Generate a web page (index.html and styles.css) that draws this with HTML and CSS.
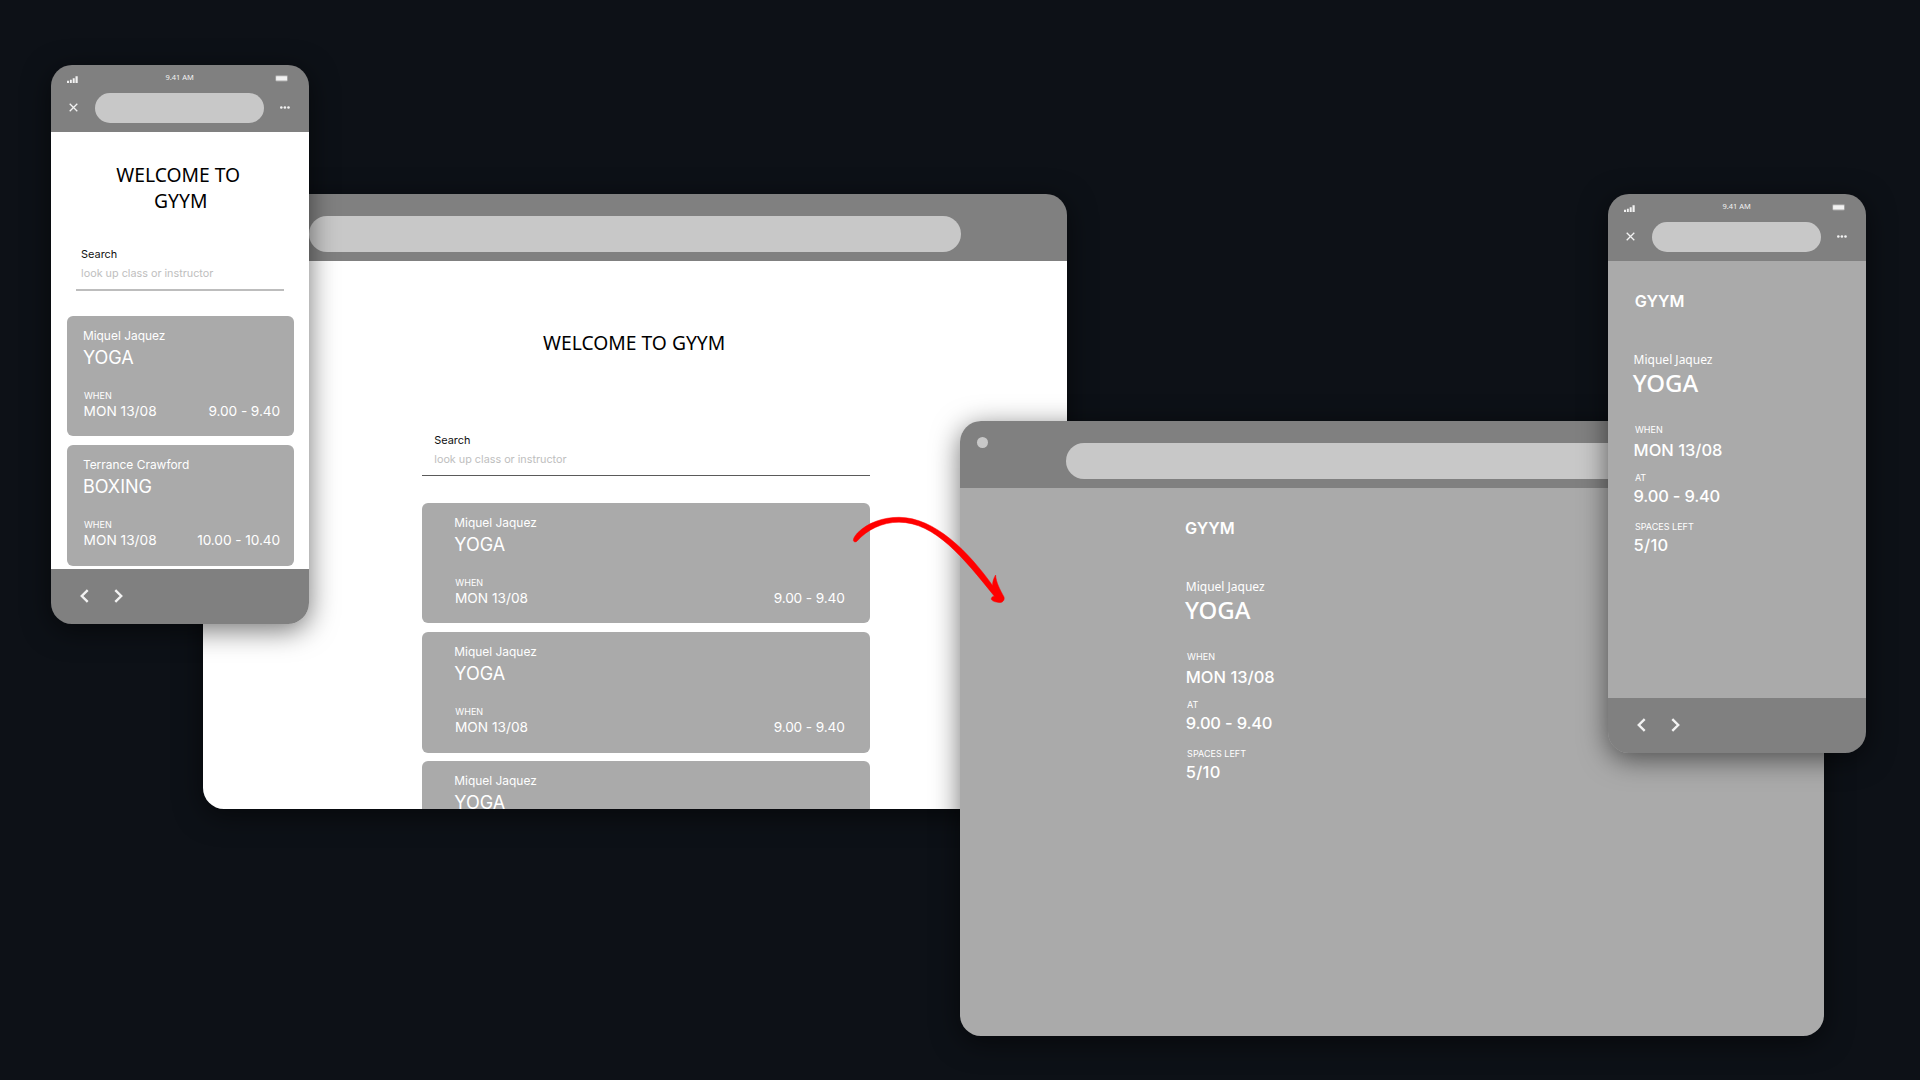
FILE: index.html
```html
<!DOCTYPE html>
<html lang="en">
<head>
<meta charset="utf-8">
<title>GYYM</title>
<link rel="stylesheet" href="styles.css">
</head>
<body>
<main class="board">

  <section class="window desktop desktop-home">
    <header class="browser-bar"><span class="dot"></span><div class="address"></div></header>
    <div class="home">
      <h1 class="title">WELCOME TO GYYM</h1>
      <div class="search"><label>Search</label><span class="hint">look up class or instructor</span></div>
      <div class="cards">
        <article class="card"><p class="coach">Miquel Jaquez</p><h2 class="class-name">YOGA</h2><p class="label">WHEN</p><div class="slot"><span>MON 13/08</span><span class="time">9.00 - 9.40</span></div></article>
        <article class="card"><p class="coach">Miquel Jaquez</p><h2 class="class-name">YOGA</h2><p class="label">WHEN</p><div class="slot"><span>MON 13/08</span><span class="time">9.00 - 9.40</span></div></article>
        <article class="card"><p class="coach">Miquel Jaquez</p><h2 class="class-name">YOGA</h2></article>
      </div>
    </div>
  </section>

  <section class="window desktop desktop-detail">
    <header class="browser-bar"><span class="dot"></span><div class="address"></div></header>
    <div class="detail">
      <h1 class="brand">GYYM</h1>
      <p class="detail-coach">Miquel Jaquez</p>
      <h2 class="detail-class">YOGA</h2>
      <dl class="facts">
        <dt>WHEN</dt><dd>MON 13/08</dd>
        <dt>AT</dt><dd class="hours">9.00 - 9.40</dd>
        <dt>SPACES LEFT</dt><dd class="spaces">5/10</dd>
      </dl>
    </div>
  </section>

  <section class="window phone phone-home">
    <header class="phone-top">
      <div class="status">
        <svg class="signal" viewBox="0 0 11 7"><path d="M0 4.8h2V7H0zM2.9 3.8h1.9V7H2.9zM5.7 2.2h2V7h-2zM8.5 .2h2.2V7H8.5z"/></svg>
        <span>9.41 AM</span>
        <svg class="battery" viewBox="0 0 14 7"><rect class="shell" x=".3" y=".3" width="12.6" height="6.2" rx="1.4"/><rect x="1.1" y="1.2" width="10.9" height="4.4" rx=".4"/></svg>
      </div>
      <div class="nav">
        <svg class="close" viewBox="0 0 9 9"><path d="M.7 .7l7.6 7.6M8.3 .7L.7 8.3"/></svg>
        <div class="address"></div>
        <svg class="more" viewBox="0 0 10 3"><circle cx="1.3" cy="1.5" r="1.3"/><circle cx="4.9" cy="1.5" r="1.3"/><circle cx="8.5" cy="1.5" r="1.3"/></svg>
      </div>
    </header>
    <div class="home">
      <h1 class="title">WELCOME TO&nbsp;<br>GYYM</h1>
      <div class="search"><label>Search</label><span class="hint">look up class or instructor</span></div>
      <div class="cards">
        <article class="card"><p class="coach">Miquel Jaquez</p><h2 class="class-name">YOGA</h2><p class="label">WHEN</p><div class="slot"><span>MON 13/08</span><span class="time">9.00 - 9.40</span></div></article>
        <article class="card"><p class="coach">Terrance Crawford</p><h2 class="class-name">BOXING</h2><p class="label">WHEN</p><div class="slot"><span>MON 13/08</span><span class="time">10.00 - 10.40</span></div></article>
      </div>
    </div>
    <footer class="phone-foot">
      <svg class="chevron" viewBox="0 0 9 14"><path d="M7.7 1.2L1.8 7l5.9 5.8"/></svg>
      <svg class="chevron" viewBox="0 0 9 14"><path d="M1.3 1.2L7.2 7l-5.9 5.8"/></svg>
    </footer>
  </section>

  <section class="window phone phone-detail">
    <header class="phone-top">
      <div class="status">
        <svg class="signal" viewBox="0 0 11 7"><path d="M0 4.8h2V7H0zM2.9 3.8h1.9V7H2.9zM5.7 2.2h2V7h-2zM8.5 .2h2.2V7H8.5z"/></svg>
        <span>9.41 AM</span>
        <svg class="battery" viewBox="0 0 14 7"><rect class="shell" x=".3" y=".3" width="12.6" height="6.2" rx="1.4"/><rect x="1.1" y="1.2" width="10.9" height="4.4" rx=".4"/></svg>
      </div>
      <div class="nav">
        <svg class="close" viewBox="0 0 9 9"><path d="M.7 .7l7.6 7.6M8.3 .7L.7 8.3"/></svg>
        <div class="address"></div>
        <svg class="more" viewBox="0 0 10 3"><circle cx="1.3" cy="1.5" r="1.3"/><circle cx="4.9" cy="1.5" r="1.3"/><circle cx="8.5" cy="1.5" r="1.3"/></svg>
      </div>
    </header>
    <div class="detail">
      <h1 class="brand">GYYM</h1>
      <p class="detail-coach">Miquel Jaquez</p>
      <h2 class="detail-class">YOGA</h2>
      <dl class="facts">
        <dt>WHEN</dt><dd>MON 13/08</dd>
        <dt>AT</dt><dd class="hours">9.00 - 9.40</dd>
        <dt>SPACES LEFT</dt><dd class="spaces">5/10</dd>
      </dl>
    </div>
    <footer class="phone-foot">
      <svg class="chevron" viewBox="0 0 9 14"><path d="M7.7 1.2L1.8 7l5.9 5.8"/></svg>
      <svg class="chevron" viewBox="0 0 9 14"><path d="M1.3 1.2L7.2 7l-5.9 5.8"/></svg>
    </footer>
  </section>

  <svg class="arrow" viewBox="0 0 170 110">
    <path class="shaft" d="M8.4 35.6C8.2 33.6 9.6 31.2 12.4 28C23 17.5 38 12.3 54 12.3C90 12.3 124 47.5 147.6 80.5C147.4 77 148.8 73 150.6 70C151 77.5 155 84.5 159 92C160 95.5 157 98 154 97.5C150.5 97.2 147.5 96.2 146.4 94.6C145.8 92.6 147.6 91.2 149.4 91.2C119 53.5 90 17.2 54 17.2C37 17.2 22 24.8 12.2 36C11 37.4 8.7 37.2 8.4 35.6Z"/>
  </svg>
</main>
</body>
</html>
```
FILE: styles.css
```css
* { box-sizing: border-box; }
body { margin: 0; background: #0d1117; font-family: Inter, "Liberation Sans", sans-serif; }
h1, h2, p, dl, dd { margin: 0; font-weight: 400; }
svg { display: block; flex: none; }

.board { position: relative; width: 1920px; height: 1080px; overflow: hidden; background: #0d1117; }

/* Windows placed freely on the board */
.window {
  position: absolute;
  display: flex;
  flex-direction: column;
  overflow: hidden;
  border-radius: 21px;
  box-shadow: 0 6px 28px rgba(0, 0, 0, .55);
}
.desktop { width: 864px; height: 614.5px; }
.phone { width: 258px; height: 559px; }
.desktop-home { left: 203px; top: 194px; }
.desktop-detail { left: 960px; top: 421px; }
.phone-home { left: 51px; top: 65px; }
.phone-detail { left: 1608px; top: 194px; }

.address { background: #c8c8c8; border-radius: 18px; }

/* Desktop browser bar */
.browser-bar { flex: none; display: flex; height: 67.2px; padding: 16px 0 0 17px; background: #808080; }
.dot { width: 11px; height: 11px; border-radius: 50%; background: #c8c8c8; }
.browser-bar .address { width: 652px; height: 36.2px; margin: 5.5px 0 0 78.3px; }

/* Phone bars */
.phone-top { flex: none; height: 67.2px; background: #808080; color: #f2f2f2; fill: #f2f2f2; }
.status { display: flex; justify-content: space-between; height: 16.8px; padding: 6.8px 20px 0 16.2px; font: 7.5px/10px "Noto Sans", sans-serif; }
.status span { margin-left: 6px; }
.signal { width: 11px; height: 7px; margin-top: 4.2px; }
.battery { width: 14px; height: 7px; margin-top: 3.4px; }
.shell { fill: #a8a8a8; }
.nav { display: flex; align-items: center; height: 30px; margin-top: 10.8px; padding-left: 18.2px; }
.close { width: 9px; height: 9px; fill: none; stroke: #f2f2f2; stroke-width: 1.3; }
.nav .address { width: 169px; height: 30px; margin: 0 15.6px 0 16.9px; }
.more { width: 10px; height: 3px; }
.phone-foot { flex: none; display: flex; gap: 25.7px; height: 55px; padding: 19.7px 0 0 28.5px; background: #808080; }
.chevron { width: 9px; height: 14px; fill: none; stroke: #f2f2f2; stroke-width: 2.4; }

/* Class list */
.home { flex: 1; min-height: 0; background: #fff; overflow: hidden; padding: 0 197px 0 219.3px; }
.title { padding-top: 69px; font: 400 19.3px/26px "Noto Sans", sans-serif; text-align: center; white-space: nowrap; color: #000; margin-right: 24px; }
.search { display: flex; flex-direction: column; height: 46px; margin-top: 74px; padding-left: 12px; border-bottom: 1px solid #5a5a5a; font-size: 10.9px; line-height: 20px; color: #111; }
.hint { color: #bebebe; font-size: 10.8px; }
.cards { display: flex; flex-direction: column; gap: 8.6px; margin-top: 26.8px; }
.card { flex: none; height: 120.5px; padding: 10.2px 25.3px 0 32px; border-radius: 6px; background: #aaa; color: #fff; }
.coach { font-size: 11.95px; line-height: 20px; }
.class-name { font-size: 18.05px; line-height: 24px; }
.label { margin: 19.7px 0 0 1px; font-size: 9.04px; line-height: 12px; }
.slot { display: flex; justify-content: space-between; padding-left: .7px; font-size: 13.7px; line-height: 19.4px; }
.time { letter-spacing: -.14px; }

.phone .home { padding: 0 15px 0 15.5px; }
.phone .title { padding-top: 29.8px; margin-right: -1px; }
.phone .search { height: 47px; margin: 30.4px 10px 0 9px; padding-left: 5.6px; border-bottom: 2px solid #bdbdbd; }
.phone .cards { margin-top: 24.6px; }
.phone .card { padding: 10.2px 13.9px 0 16.4px; }
.phone .time { letter-spacing: -.08px; }

/* Class detail */
.detail { flex: 1; min-height: 0; padding: 27.4px 0 0 225.8px; background: #aaa; color: #fff; }
.brand { margin-left: -.8px; font-size: 16.2px; font-weight: 600; line-height: 24px; }
.detail-coach { margin-top: 39.6px; font: 400 12px/16px "Noto Sans", sans-serif; }
.detail-class { margin-left: -.9px; font: 500 24px/29.2px "Noto Sans", sans-serif; }
.facts { padding-top: 26.5px; font-size: 9.04px; line-height: 12px; }
.facts dt { margin-left: 1.3px; }
.facts dd { margin: 4.3px 0 11.7px; font-size: 16.5px; font-weight: 500; line-height: 20px; }
.facts .hours { margin: 2.1px 0 15.2px; letter-spacing: -.2px; }
.facts .spaces { margin: 1.4px 0 0; letter-spacing: .25px; }
.phone .detail { padding-left: 25.6px; }
.phone .brand { margin-left: 1.2px; }

/* Link between the list and its detail */
.arrow { position: absolute; left: 845px; top: 505px; width: 170px; height: 110px; }
.shaft { fill: #f00; stroke: #f00; stroke-width: .5; stroke-linejoin: round; }
```
